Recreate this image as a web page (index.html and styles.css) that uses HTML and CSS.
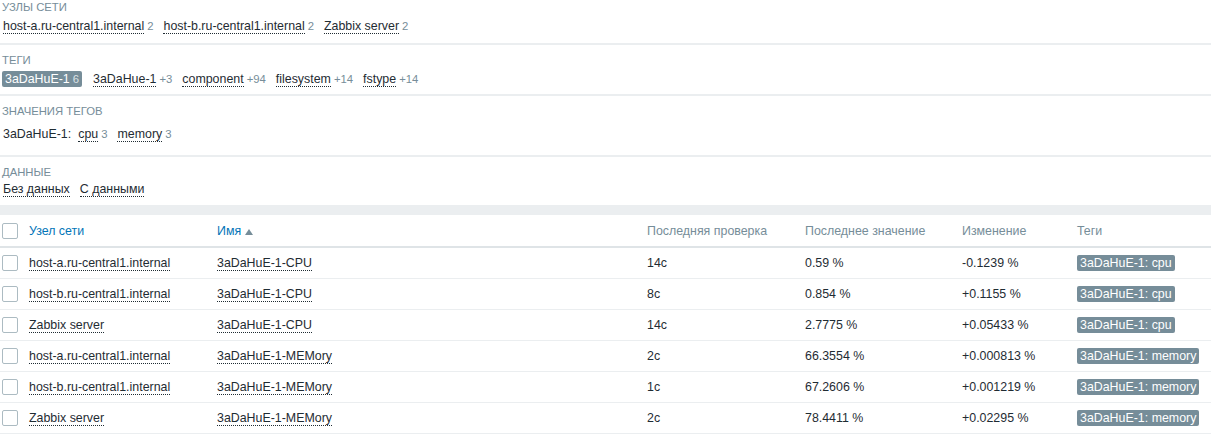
FILE: index.html
```html
<!DOCTYPE html>
<html lang="ru">
<head>
<meta charset="utf-8">
<title>Данные</title>
<link rel="stylesheet" href="styles.css">
</head>
<body>
<div class="subfilters">
  <section class="sf sf-first">
    <div class="sf-label">Узлы сети</div>
    <div class="sf-items">
      <span class="sf-item"><span class="lnk">host-a.ru-central1.internal</span><span class="cnt">2</span></span>
      <span class="sf-item"><span class="lnk">host-b.ru-central1.internal</span><span class="cnt">2</span></span>
      <span class="sf-item"><span class="lnk">Zabbix server</span><span class="cnt">2</span></span>
    </div>
  </section>
  <section class="sf sf-tags">
    <div class="sf-label">Теги</div>
    <div class="sf-items">
      <span class="sf-item selected"><span class="lnk">3aDaHuE-1</span><span class="cnt">6</span></span>
      <span class="sf-item"><span class="lnk">3aDaHue-1</span><span class="cnt">+3</span></span>
      <span class="sf-item"><span class="lnk">component</span><span class="cnt">+94</span></span>
      <span class="sf-item"><span class="lnk">filesystem</span><span class="cnt">+14</span></span>
      <span class="sf-item"><span class="lnk">fstype</span><span class="cnt">+14</span></span>
    </div>
  </section>
  <section class="sf sf-values">
    <div class="sf-label">Значения тегов</div>
    <div class="sf-items">
      <span class="tv-name">3aDaHuE-1:</span>
      <span class="sf-item"><span class="lnk">cpu</span><span class="cnt">3</span></span>
      <span class="sf-item"><span class="lnk">memory</span><span class="cnt">3</span></span>
    </div>
  </section>
  <section class="sf sf-last">
    <div class="sf-label">Данные</div>
    <div class="sf-items">
      <span class="sf-item"><span class="lnk">Без данных</span></span>
      <span class="sf-item"><span class="lnk">С данными</span></span>
    </div>
  </section>
</div>
<div class="band"></div>
<table class="list">
  <colgroup>
    <col class="c-cb"><col class="c-host"><col class="c-name"><col class="c-check"><col class="c-value"><col class="c-change"><col class="c-tags">
  </colgroup>
  <thead>
    <tr>
      <th><span class="cb"></span></th>
      <th><span class="sort">Узел сети</span></th>
      <th><span class="sort">Имя</span><span class="arrow"></span></th>
      <th>Последняя проверка</th>
      <th>Последнее значение</th>
      <th>Изменение</th>
      <th>Теги</th>
    </tr>
  </thead>
  <tbody>
    <tr><td><span class="cb"></span></td><td><span class="lnk">host-a.ru-central1.internal</span></td><td><span class="lnk">3aDaHuE-1-CPU</span></td><td>14с</td><td>0.59 %</td><td>-0.1239 %</td><td><span class="tag">3aDaHuE-1: cpu</span></td></tr>
    <tr><td><span class="cb"></span></td><td><span class="lnk">host-b.ru-central1.internal</span></td><td><span class="lnk">3aDaHuE-1-CPU</span></td><td>8с</td><td>0.854 %</td><td>+0.1155 %</td><td><span class="tag">3aDaHuE-1: cpu</span></td></tr>
    <tr><td><span class="cb"></span></td><td><span class="lnk">Zabbix server</span></td><td><span class="lnk">3aDaHuE-1-CPU</span></td><td>14с</td><td>2.7775 %</td><td>+0.05433 %</td><td><span class="tag">3aDaHuE-1: cpu</span></td></tr>
    <tr><td><span class="cb"></span></td><td><span class="lnk">host-a.ru-central1.internal</span></td><td><span class="lnk">3aDaHuE-1-MEMory</span></td><td>2с</td><td>66.3554 %</td><td>+0.000813 %</td><td><span class="tag">3aDaHuE-1: memory</span></td></tr>
    <tr><td><span class="cb"></span></td><td><span class="lnk">host-b.ru-central1.internal</span></td><td><span class="lnk">3aDaHuE-1-MEMory</span></td><td>1с</td><td>67.2606 %</td><td>+0.001219 %</td><td><span class="tag">3aDaHuE-1: memory</span></td></tr>
    <tr><td><span class="cb"></span></td><td><span class="lnk">Zabbix server</span></td><td><span class="lnk">3aDaHuE-1-MEMory</span></td><td>2с</td><td>78.4411 %</td><td>+0.02295 %</td><td><span class="tag">3aDaHuE-1: memory</span></td></tr>
  </tbody>
</table>
</body>
</html>
```

FILE: styles.css
```css
html, body {
  margin: 0;
  padding: 0;
  background: #ffffff;
}
body {
  font-family: "Liberation Sans", Arial, sans-serif;
  font-size: 12.4px;
  color: #1f2c33;
}

/* ---------- subfilters ---------- */
.sf {
  padding: 8px 0 7px 3px;
  border-bottom: 2px solid #ebeef0;
}
.sf-first {
  padding-top: 0;
  padding-bottom: 9px;
}
.sf-values {
  padding-bottom: 13px;
}
.sf-values .sf-items {
  margin-top: 7px;
}
.sf-last {
  border-bottom: 0;
  padding-bottom: 8px;
}
.sf-label {
  font-size: 11.3px;
  line-height: 15px;
  text-transform: uppercase;
  color: #768d99;
  margin-left: -1px;
}
.sf-items {
  display: flex;
  flex-wrap: wrap;
  align-items: center;
  gap: 10px;
  margin-top: 3px;
  line-height: 16px;
}
.sf-item {
  display: inline-flex;
  align-items: baseline;
}
.sf-item.selected {
  background: #768d99;
  color: #ffffff;
  border-radius: 2px;
  padding: 0 3px;
  margin-left: -1px;
  margin-right: 1px;
}
.sf-item.selected .lnk {
  border-bottom-color: transparent;
}
.sf-item.selected .cnt {
  color: #dbe2e6;
}
.lnk {
  border-bottom: 1px dotted #1f2c33;
  line-height: 13px;
}
.cnt {
  font-size: 11.3px;
  color: #768d99;
  margin-left: 3px;
}
.tv-name {
  margin-right: -3px;
}

/* ---------- band ---------- */
.band {
  height: 10px;
  background: #ebeef0;
}

/* ---------- table ---------- */
.list {
  width: 1211px;
  border-collapse: collapse;
  table-layout: fixed;
}
.c-cb { width: 29px; }
.c-host { width: 188px; }
.c-name { width: 430px; }
.c-check { width: 158px; }
.c-value { width: 157px; }
.c-change { width: 115px; }
.c-tags { width: 134px; }

.list th,
.list td {
  padding: 0;
  text-align: left;
  vertical-align: middle;
  white-space: nowrap;
}
.list th {
  height: 31px;
  font-weight: normal;
  color: #768d99;
  border-bottom: 2px solid #dfe4e7;
}
.list td {
  height: 30px;
  border-bottom: 1px solid #ebeef0;
}
.sort {
  color: #0275b8;
}
.arrow {
  display: inline-block;
  width: 0;
  height: 0;
  margin-left: 4px;
  border-left: 4px solid transparent;
  border-right: 4px solid transparent;
  border-bottom: 6px solid #768d99;
  vertical-align: 0;
}
.cb {
  display: block;
  width: 14px;
  height: 14px;
  margin-left: 2px;
  border: 1px solid #acbbc2;
  border-radius: 2px;
  background: #ffffff;
}
.tag {
  display: inline-block;
  background: #768d99;
  color: #ffffff;
  border-radius: 2px;
  padding: 0 3px;
  line-height: 16px;
}
```
